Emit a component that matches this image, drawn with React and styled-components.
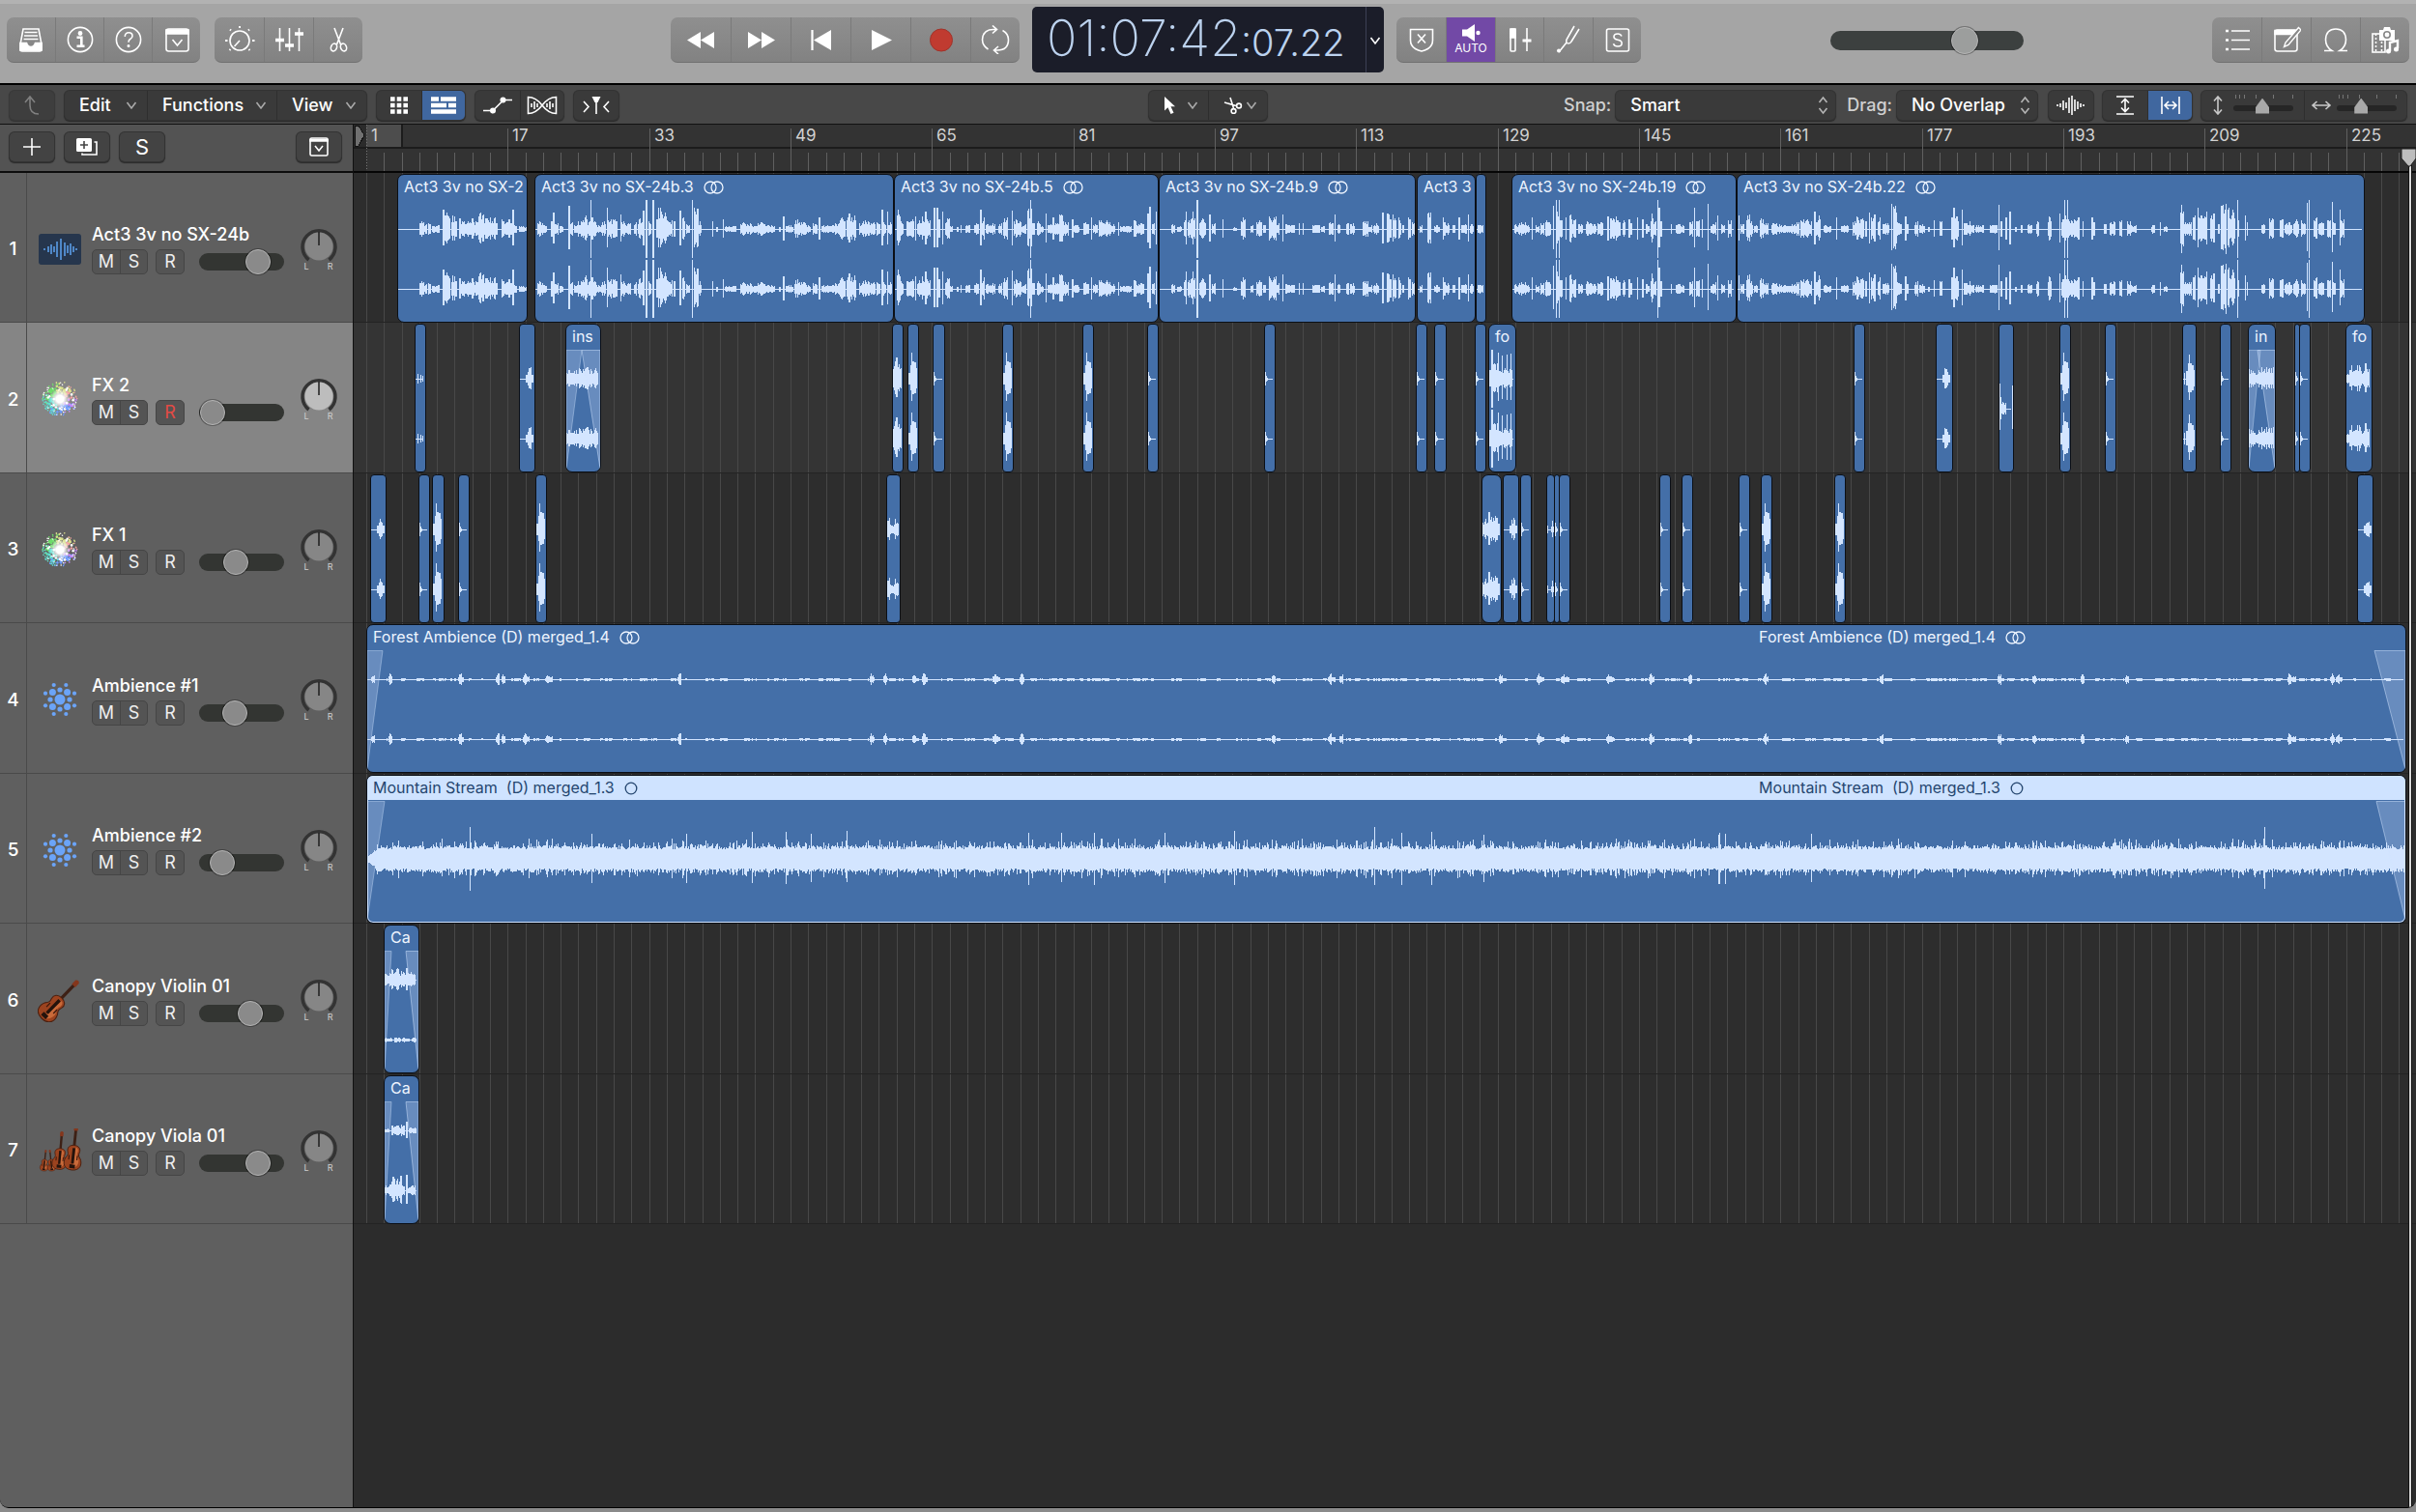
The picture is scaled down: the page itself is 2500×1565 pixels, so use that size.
import React from 'react'
import styled, { createGlobalStyle, css } from 'styled-components'

const GlobalStyle = createGlobalStyle`
  * { box-sizing: border-box; }
  html, body, #root { height: 100%; }
  body {
    margin: 0;
    background: #8a8a8a;
    font-family: Inter, "Liberation Sans", sans-serif;
    color: #fff;
    overflow: hidden;
  }
  button, select, input {
    font: inherit;
    color: inherit;
    margin: 0;
  }
`

/* ---------- timeline maths ---------- */

const FIRST_BAR = 13
const BAR_WIDTH = 146.33 / 16
const barX = bar => Math.round(FIRST_BAR + (bar - 1) * BAR_WIDTH)

const TOP = 57
const BOTTOM = 119
const MIDDLE = 87

function random(seed) {
  let s = seed
  return () => {
    s = (s * 1664525 + 1013904223) % 4294967296
    return s / 4294967296
  }
}

// every hit is [x, width, height]
function wavePath(hits, center, width, seed) {
  const rand = random(seed)
  let d = `M0 ${center}h${width - 4}v1H0z`
  hits.forEach(([x, w, amp]) => {
    for (let i = 0; i < w; i++) {
      const k = w < 3 ? 1 : 0.45 + 0.55 * rand()
      const up = Math.round(amp * k)
      const down = Math.round(Math.min(amp, 29) * k * (amp > 28 ? 1 : 0.82))
      d += `M${x + i} ${center - up}h1v${up + down + 1}h-1z`
    }
  })
  return d
}

function forest(width, seed) {
  const rand = random(seed)
  const hits = []
  let x = 4
  while (x < width - 10) {
    const w = 1 + Math.floor(rand() * 9)
    const loud = rand() > 0.86
    hits.push([x, w, loud ? 3 : 1])
    if (loud) {
      hits.push([x + 1, 3, 6])
    }
    x += w + 1 + Math.floor(rand() * rand() * 22)
  }
  return hits
}

function stream(width, seed) {
  const rand = random(seed)
  let d = ''
  for (let x = 0; x < width - 3; x++) {
    const ramp = Math.min(1, 0.2 + x / 14)
    const r = rand()
    const spike = r > 0.994 ? 15 : r > 0.94 ? 7 : r > 0.8 ? 4 : 0
    const up = Math.round((11 + rand() * 4 + spike) * ramp)
    const down = Math.round((9 + rand() * 4 + spike * 0.9) * ramp)
    d += `M${x} ${MIDDLE - up}h1v${up + down}h-1z`
  }
  return d + `M106 53h1v66h-1zM1042 53h1v60h-1zM1963 53h1v64h-1z`
}

/* ---------- data ---------- */

const dialogue = [
  { from: 44, hits: [
    [23, 5, 10], [28, 3, 5], [32, 3, 9], [36, 8, 4], [47, 2, 20], [49, 6, 18], [56, 4, 14], [60, 2, 8], [64, 3, 12], [67, 5, 9], [72, 8, 12], [80, 4, 8], [84, 6, 18], [90, 4, 12], [94, 10, 12], [108, 3, 16], [111, 4, 10], [115, 4, 11], [119, 2, 20], [121, 3, 7], [126, 8, 3],
    [143, 2, 16], [145, 6, 9], [151, 4, 4], [159, 2, 8], [161, 2, 17], [163, 4, 6], [168, 4, 4], [177, 2, 24], [179, 3, 8], [183, 4, 4], [187, 5, 9], [192, 5, 16], [197, 3, 8], [200, 1, 30], [201, 5, 12], [206, 6, 4], [212, 4, 8], [217, 1, 22], [218, 5, 11], [223, 3, 18], [226, 2, 8], [231, 1, 15], [232, 4, 11], [236, 6, 6], [245, 3, 8], [249, 5, 11], [254, 2, 19], [257, 2, 30], [260, 3, 9], [264, 2, 30], [268, 2, 10], [270, 5, 23], [275, 6, 17], [281, 4, 10], [286, 2, 8], [292, 2, 19], [295, 3, 12], [299, 4, 5], [305, 1, 30], [307, 5, 24], [312, 3, 8], [326, 1, 8], [330, 2, 2], [337, 1, 10], [339, 12, 3], [355, 6, 8], [361, 6, 6], [367, 6, 4], [373, 8, 7], [381, 10, 4], [395, 2, 2], [399, 2, 13], [402, 8, 4], [411, 6, 10], [417, 7, 7], [424, 4, 4], [430, 5, 7], [436, 2, 12], [439, 4, 4], [443, 10, 5], [453, 5, 7], [458, 4, 16], [462, 2, 8], [465, 4, 17], [469, 6, 14], [478, 3, 6], [481, 6, 9], [487, 8, 8], [496, 4, 8], [501, 2, 20], [503, 3, 8], [507, 1, 18], [508, 4, 7]
  ] },
  { from: 554, hits: [
    [7, 4, 20], [11, 3, 8], [17, 3, 9], [20, 5, 10], [26, 1, 13], [28, 5, 10], [33, 4, 14], [36, 2, 18], [38, 4, 13], [45, 2, 22], [48, 2, 22], [50, 2, 10], [54, 1, 18], [57, 5, 12], [62, 3, 4], [69, 2, 2], [73, 1, 4], [78, 5, 5], [87, 5, 6], [93, 2, 20], [95, 3, 14], [99, 10, 6], [112, 4, 6], [117, 5, 12], [126, 1, 19], [128, 8, 10], [136, 5, 5], [142, 5, 24], [145, 1, 30], [147, 3, 9], [152, 4, 8], [156, 3, 4], [161, 1, 16], [163, 6, 8], [168, 2, 12], [170, 5, 8], [175, 4, 15], [179, 6, 8], [188, 2, 10], [190, 6, 4], [200, 6, 7], [208, 1, 12], [210, 5, 5], [216, 12, 9], [228, 5, 5], [236, 1, 7], [238, 12, 4], [252, 3, 9], [255, 8, 6], [266, 2, 16], [268, 2, 23], [271, 3, 8], [275, 1, 18],
    [279, 6, 5], [291, 4, 5], [297, 5, 3], [304, 3, 10], [306, 1, 18], [308, 4, 11], [312, 4, 18], [317, 2, 30], [320, 7, 11], [330, 2, 15], [333, 4, 7], [344, 1, 10], [355, 4, 2], [363, 5, 13], [373, 3, 5], [379, 6, 10], [386, 3, 6], [392, 8, 14], [400, 3, 7], [406, 1, 15], [409, 4, 5], [413, 6, 4], [423, 1, 6], [427, 1, 6], [437, 8, 5], [446, 4, 4], [454, 5, 8], [460, 1, 15], [463, 3, 7], [472, 3, 8], [476, 5, 6], [489, 6, 9], [495, 4, 4], [500, 6, 6], [509, 2, 17], [514, 2, 16], [517, 2, 10]
  ] },
  { from: 1064, hits: [
    [5, 2, 15], [10, 4, 15], [16, 3, 12], [20, 2, 4], [26, 3, 14], [30, 3, 9],
    [38, 3, 4], [46, 4, 24], [53, 6, 4], [62, 3, 13], [65, 4, 7], [72, 3, 5], [78, 2, 12], [81, 6, 7], [88, 1, 15], [90, 4, 6],
    [98, 6, 5],
    [136, 6, 5], [141, 8, 7], [149, 3, 4], [154, 1, 12], [158, 4, 5], [163, 4, 7], [168, 6, 9], [176, 1, 24], [179, 1, 30], [180, 5, 19], [182, 1, 30], [184, 2, 9], [189, 1, 12], [193, 3, 16], [196, 4, 10], [202, 5, 6], [210, 5, 9], [215, 6, 6], [222, 6, 9], [232, 2, 13], [235, 5, 12], [240, 6, 14], [248, 3, 10], [254, 4, 11], [263, 1, 12], [268, 2, 10], [272, 4, 5], [277, 3, 16], [280, 3, 8], [284, 1, 30], [285, 2, 22], [287, 2, 8], [298, 1, 5], [303, 9, 5], [317, 4, 9], [322, 1, 22], [324, 4, 10], [330, 1, 10], [336, 1, 26], [339, 6, 7], [346, 1, 14], [350, 4, 5], [357, 4, 10],
    [368, 1, 14], [370, 4, 6], [376, 4, 18], [380, 3, 9], [384, 4, 4], [390, 4, 12], [394, 5, 6], [402, 6, 8], [408, 20, 5], [425, 6, 7], [432, 8, 12], [440, 4, 8], [446, 2, 18], [448, 5, 14], [456, 8, 4], [469, 1, 12], [474, 8, 4], [486, 3, 8], [489, 9, 13], [499, 2, 8], [503, 1, 17], [505, 3, 12], [508, 2, 15], [512, 3, 13], [517, 3, 6]
  ] },
  { from: 1574, hits: [
    [10, 4, 6], [16, 1, 26], [18, 4, 25], [22, 5, 8], [30, 2, 13], [32, 2, 5], [40, 4, 9], [45, 6, 5], [54, 2, 2], [60, 1, 9], [66, 3, 8], [78, 2, 12], [80, 2, 22], [82, 4, 14], [89, 1, 20], [91, 8, 8], [99, 3, 4], [103, 9, 4], [118, 8, 5], [127, 1, 25], [129, 2, 8], [134, 2, 12], [138, 2, 18], [144, 2, 2], [150, 2, 4], [157, 5, 6], [166, 3, 9], [178, 4, 13], [190, 1, 16], [192, 4, 11], [195, 1, 30], [196, 6, 14], [198, 1, 30], [202, 7, 12], [209, 2, 12], [214, 1, 8], [223, 2, 12], [225, 2, 7], [236, 3, 7], [242, 6, 8], [252, 3, 9], [260, 4, 8], [264, 6, 4], [285, 4, 5], [294, 1, 7], [298, 4, 3], [315, 1, 17], [316, 3, 30], [319, 8, 9], [328, 3, 15], [333, 5, 24], [338, 5, 20], [346, 5, 22], [354, 2, 5], [357, 3, 27], [359, 4, 30], [364, 8, 22], [374, 1, 30], [375, 1, 9], [382, 1, 14], [384, 1, 7], [399, 4, 6], [407, 5, 11], [418, 4, 12], [423, 8, 7], [432, 6, 10], [440, 5, 9], [446, 1, 27], [448, 1, 30], [453, 4, 17], [458, 6, 7], [467, 4, 18], [472, 1, 28], [473, 3, 12], [480, 1, 20], [481, 4, 11]
  ] }
]

const dialogueHits = dialogue.flatMap(({ from, hits }) =>
  hits.map(([x, w, amp]) => [x + from, w, amp])
)

const shapes = {
  tick: [[0, 1, 7], [1, 1, 3], [2, 1, 1]],
  blip: [[6, 2, 4], [8, 4, 12], [12, 2, 4]],
  pair: [[2, 1, 5], [5, 1, 4], [7, 1, 3]],
  burst: [[0, 2, 6], [2, 1, 14], [3, 1, 27], [4, 2, 18], [6, 2, 17], [8, 1, 11]],
  swell: [[0, 1, 10], [1, 1, 13], [2, 1, 18], [3, 2, 22], [5, 3, 17], [8, 1, 11]],
  blob: [[0, 3, 9], [3, 3, 12], [6, 2, 18], [8, 8, 15], [15, 3, 8]],
  block: [[0, 2, 9], [2, 1, 12], [3, 5, 7], [8, 1, 11], [9, 3, 8]],
  voice: [[0, 2, 9], [2, 2, 30], [4, 5, 18], [9, 1, 27], [10, 4, 12], [13, 1, 24], [14, 4, 13], [18, 1, 25], [19, 3, 12], [22, 1, 26], [23, 1, 9]],
  chatter: [[0, 5, 9], [5, 1, 14], [6, 5, 9], [11, 4, 15], [15, 4, 10], [19, 2, 16], [21, 3, 11]],
  insect: [[0, 5, 10], [5, 2, 6], [7, 6, 9], [13, 10, 13], [23, 6, 10], [29, 4, 12]],
  insectShort: [[0, 5, 10], [5, 2, 6], [7, 3, 8], [10, 6, 12], [16, 10, 13]],
  double: [[0, 1, 4], [4, 1, 3], [5, 1, 9], [6, 1, 3]],
  burstLate: [[1, 1, 6], [3, 3, 8], [5, 1, 16], [6, 1, 25], [7, 2, 16], [9, 2, 14], [11, 1, 9]],
  violin: [[0, 2, 6], [2, 4, 8], [6, 9, 12], [15, 7, 9], [22, 3, 12], [25, 7, 8]],
  flat: [[0, 8, 2], [10, 7, 2], [18, 8, 2], [28, 5, 2]],
  viola: [[0, 5, 2], [7, 5, 6], [12, 5, 5], [17, 4, 6], [22, 2, 9], [25, 8, 3]],
  violaLow: [[0, 4, 5], [4, 3, 8], [7, 3, 15], [10, 5, 12], [15, 3, 16], [18, 3, 8], [22, 2, 16], [24, 8, 5]]
}

const takes = [
  [45, 135, 'Act3 3v no SX-2'],
  [187, 372, 'Act3 3v no SX-24b.3', true],
  [559, 274, 'Act3 3v no SX-24b.5', true],
  [833, 266, 'Act3 3v no SX-24b.9', true],
  [1100, 61, 'Act3 3'],
  [1161, 11, ''],
  [1198, 233, 'Act3 3v no SX-24b.19', true],
  [1431, 650, 'Act3 3v no SX-24b.22', true]
].map(([x, w, label, stereo]) => ({
  x, w, label, stereo,
  top: dialogueHits.filter(h => h[0] > x && h[0] + h[1] < x + w).map(h => [h[0] - x, h[1], h[2]])
}))

const clips = list => list.map(([x, w, shape, label, fadeIn, fadeOut]) => ({
  x, w, label, fadeIn, fadeOut, top: shapes[shape]
}))

const tracks = [
  { name: 'Act3 3v no SX-24b', icon: 'audio', volume: 78, regions: takes },
  {
    name: 'FX 2', icon: 'spark', volume: 2, selected: true, armed: true,
    regions: [
      ...clips([
        [63, 12, 'pair'], [171, 17, 'blip'], [219, 37, 'insect', 'ins', 16, 19],
        [557, 12, 'swell'], [573, 12, 'burst'], [599, 13, 'tick'], [671, 12, 'burst'], [754, 12, 'burst'],
        [821, 12, 'tick'], [942, 12, 'tick'], [1099, 12, 'tick'], [1118, 13, 'tick'], [1160, 12, 'tick'],
        [1174, 29, 'voice', 'fo'], [1552, 12, 'tick'], [1637, 18, 'blip']
      ]),
      { x: 1702, w: 16, mono: true, top: [[0, 1, 26], [1, 1, 12], [2, 1, 5], [3, 4, 7], [13, 1, 24]] },
      ...clips([
        [1765, 12, 'burst'], [1812, 12, 'tick'], [1892, 15, 'burstLate'], [1931, 12, 'tick'],
        [1960, 29, 'insectShort', 'in', 12, 18], [2008, 6, 'tick'], [2013, 12, 'tick'], [2061, 28, 'chatter', 'fo']
      ])
    ]
  },
  {
    name: 'FX 1', icon: 'spark', volume: 40,
    regions: clips([
      [17, 17, 'blip'], [67, 12, 'tick'], [81, 13, 'burst'], [108, 12, 'tick'], [188, 12, 'burst'],
      [551, 15, 'block'], [1167, 21, 'blob'], [1189, 17, 'blip'], [1207, 12, 'tick'], [1234, 9, 'double'],
      [1242, 6, 'tick'], [1247, 12, 'tick'], [1351, 12, 'tick'], [1374, 12, 'tick'], [1433, 12, 'tick'],
      [1456, 12, 'burst'], [1532, 12, 'burst'], [2073, 17, 'blip']
    ])
  },
  {
    name: 'Ambience #1', icon: 'dots', volume: 38,
    regions: [{ x: 13, w: 2111, label: 'Forest Ambience (D) merged_1.4', stereo: true, repeat: true, top: forest(2111, 7), fadeIn: 16, fadeOut: 32 }]
  },
  {
    name: 'Ambience #2', icon: 'dots', volume: 17,
    regions: [{ x: 13, w: 2111, label: 'Mountain Stream  (D) merged_1.3', ring: true, repeat: true, active: true, path: stream(2111, 11), fadeIn: 18, fadeOut: 30 }]
  },
  {
    name: 'Canopy Violin 01', icon: 'violin', volume: 65,
    regions: [{ x: 31, w: 37, label: 'Ca', top: shapes.violin, bottom: shapes.flat, fadeIn: 7, fadeOut: 13 }]
  },
  {
    name: 'Canopy Viola 01', icon: 'strings', volume: 78,
    regions: [{ x: 31, w: 37, label: 'Ca', top: shapes.viola, bottom: shapes.violaLow, fadeIn: 7, fadeOut: 13 }]
  }
]

/* ---------- top bar ---------- */

const Window = styled.div`
  display: flex;
  flex-direction: column;
  height: 100vh;
  padding-bottom: 4px;
`

const TopBar = styled.header`
  display: grid;
  grid-template-columns: 1fr auto 1fr;
  column-gap: 13px;
  height: 88px;
  padding: 7px 7px 0;
  background: #a5a5a5;
  border-top: 4px solid #b2b2b2;
  border-bottom: 2px solid #000;
`

const Side = styled.div`
  display: flex;
  justify-content: space-between;
  padding-top: 7px;
`

const Cluster = styled.div`
  display: flex;
  gap: 15px;
`

const ButtonGroup = styled.div`
  display: flex;
  height: 47px;
  border-radius: 7px;
  overflow: hidden;
  background: linear-gradient(#8f8f8f, #828282);
  border-bottom: 1px solid #717171;
`

const TopButton = styled.button`
  display: flex;
  flex-direction: column;
  align-items: center;
  justify-content: center;
  width: ${props => props.$width || 51}px;
  padding: 0;
  border: 0;
  font-size: 12px;
  line-height: 14px;
  background: ${props => (props.$on ? '#7249a6' : 'transparent')};
  & + & {
    border-left: 1px solid #7a7a7a;
  }
`

const Lcd = styled.div`
  display: flex;
  width: 364px;
  height: 68px;
  margin-top: -4px;
  border-radius: 5px;
  background: #1b1d29;
  color: #bcd2ee;
`

const Time = styled.div`
  flex: 1;
  display: flex;
  align-items: baseline;
  padding-left: 15px;
  font-weight: 200;
  font-size: 52px;
  line-height: 66px;
  small {
    font-size: 38px;
    font-weight: 300;
  }
`

const LcdMenu = styled.button`
  width: 19px;
  padding: 0;
  border: 0;
  border-left: 1px solid #3c4054;
  background: none;
`

const Range = styled.input.attrs({ type: 'range' })`
  appearance: none;
  display: block;
  width: ${props => props.$width}px;
  height: ${props => props.$thumb}px;
  background: none;
  &::-webkit-slider-runnable-track {
    height: ${props => props.$track}px;
    border-radius: 10px;
    background: ${props => props.$color || '#333532'};
  }
  &::-webkit-slider-thumb {
    appearance: none;
    width: ${props => props.$thumb}px;
    height: ${props => props.$thumb}px;
    margin-top: ${props => (props.$track - props.$thumb) / 2}px;
    border-radius: 50%;
    border: 1px solid #b5b5b5;
    background: ${props => props.$knob || '#8a8a8a'};
    box-shadow: 0 0 0 1px rgba(0, 0, 0, 0.3);
  }
`

const MasterVolume = styled.label`
  display: flex;
  align-items: center;
  height: 47px;
`

/* ---------- menu bar ---------- */

const MenuBar = styled.nav`
  display: grid;
  grid-template-columns: 1fr auto 1fr;
  align-items: center;
  height: 41px;
  padding: 1px 10px 0;
  background: #484848;
  border-bottom: 1px solid #111;
  font-size: 18px;
`

const Tools = styled.div`
  display: flex;
  align-items: center;
  gap: ${props => (props.$end ? 10 : 11)}px;
  justify-content: ${props => (props.$end ? 'flex-end' : 'flex-start')};
`

const Segment = styled.div`
  display: flex;
  height: 30px;
  border-radius: 5px;
  background: #3a3a3a;
  box-shadow: 0 0 0 1px #333, 0 1px 1px 1px #2a2a2a;
  overflow: hidden;
  opacity: ${props => (props.$dim ? 0.7 : 1)};
`

const ToolButton = styled.button`
  display: flex;
  align-items: center;
  justify-content: ${props => (props.$menu ? 'space-between' : 'center')};
  width: ${props => props.$width || 46}px;
  padding: ${props => (props.$menu ? '0 10px 0 15px' : 0)};
  border: 0;
  font-size: ${props => props.$size || 18}px;
  font-weight: ${props => (props.$size ? 400 : 500)};
  line-height: 30px;
  background: ${props => (props.$on ? '#40679f' : 'transparent')};
  & + & {
    border-left: 1px solid #2e2e2e;
  }
`

const Field = styled.label`
  display: flex;
  align-items: center;
  gap: 5px;
  padding-right: 2px;
  color: #d0d0d0;
  font-weight: 500;
`

const SelectBox = styled.div`
  display: grid;
  width: ${props => props.$width}px;
  height: 30px;
  border-radius: 5px;
  background: #3a3a3a;
  box-shadow: 0 0 0 1px #333, 0 1px 1px 1px #2a2a2a;
  color: #fff;
  > * {
    grid-area: 1 / 1;
  }
  svg {
    justify-self: end;
    align-self: center;
    margin-right: 7px;
    pointer-events: none;
  }
  select {
    appearance: none;
    border: 0;
    padding: 0 0 0 15px;
    background: none;
    font-size: 18px;
    line-height: 30px;
  }
`

const ZoomControl = styled.label`
  display: flex;
  align-items: center;
  gap: 5px;
  width: 106px;
  padding: 0 6px;
  & + & {
    border-left: 1px solid #2e2e2e;
  }
`

const ZoomRange = styled.input.attrs({ type: 'range' })`
  appearance: none;
  width: 62px;
  height: 22px;
  background:
    linear-gradient(90deg, #777 1px, transparent 0 4px, #777 0 5px, transparent 0 9px, #777 0 10px, transparent 0 21px, #777 0 22px, transparent 0 39px, #777 0 40px, transparent 0 59px, #777 0 60px, transparent 0) 2px 0 / 62px 4px no-repeat;
  &::-webkit-slider-runnable-track {
    height: 6px;
    margin-top: 6px;
    border-radius: 3px;
    background: #262626;
  }
  &::-webkit-slider-thumb {
    appearance: none;
    width: 14px;
    height: 16px;
    margin-top: -7px;
    background: #a9a9a9;
    clip-path: polygon(50% 0, 100% 60%, 100% 100%, 0 100%, 0 60%);
  }
`

/* ---------- track list ---------- */

const Workspace = styled.main`
  flex: 1;
  display: grid;
  grid-template-columns: 366px minmax(0, 1fr);
  min-height: 0;
  background: #2c2c2c;
  border-bottom: 1px solid #000;
  border-radius: 0 0 9px 9px;
  overflow: hidden;
`

const Panel = styled.section`
  display: flex;
  flex-direction: column;
  background: #5f5f5f;
  border-right: 1px solid #111;
`

const PanelTools = styled.div`
  display: flex;
  align-items: center;
  gap: 11px;
  height: 50px;
  padding: 0 12px 2px 10px;
  background: #535353;
  border-bottom: 2px solid #0c0c0c;
  ${Segment} {
    background: #434343;
  }
  ${Segment}:last-child {
    margin-left: auto;
  }
`

const rowHeight = css`
  height: 155px;
  &:nth-child(even) {
    height: 156px;
  }
`

const Tracks = styled.div`
  flex: none;
`

const TrackHeader = styled.div`
  ${rowHeight}
  display: grid;
  grid-template-columns: 28px 67px 1fr 71px;
  background: ${props => (props.$selected ? '#858585' : '#5f5f5f')};
  border-bottom: 1px solid #4a4a4a;
  > * {
    padding-top: 3px;
  }
`

const TrackNumber = styled.div`
  display: grid;
  place-items: center;
  border-right: 1px solid #4a4a4a;
  font-size: 19px;
  font-weight: 500;
`

const IconCell = styled.div`
  display: grid;
  place-items: center;
`

const TrackInfo = styled.div`
  align-self: center;
`

const TrackName = styled.div`
  font-size: 18px;
  font-weight: 500;
  line-height: 24px;
  white-space: nowrap;
`

const TrackControls = styled.div`
  display: flex;
  align-items: center;
  margin-top: 3px;
`

const SmallGroup = styled.div`
  display: flex;
  height: 26px;
  margin-right: ${props => (props.$last ? 15 : 8)}px;
  border: 1px solid #454545;
  border-radius: 5px;
  background: #545454;
`

const SmallButton = styled.button`
  width: 28px;
  padding: 0;
  border: 0;
  background: none;
  font-size: 18px;
  line-height: 24px;
  color: ${props => (props.$armed ? '#e24b45' : '#eee')};
  & + & {
    border-left: 1px solid #454545;
  }
`

const Pan = styled.div`
  align-self: center;
  display: flex;
  flex-direction: column;
  align-items: center;
`

const PanLabels = styled.div`
  display: flex;
  justify-content: space-between;
  width: 30px;
  margin-top: -4px;
  font-size: 9px;
  line-height: 10px;
  color: #cfcfcf;
`

/* ---------- arrange area ---------- */

const Arrange = styled.section`
  position: relative;
  overflow: hidden;
`

const Ruler = styled.div`
  position: relative;
  height: 50px;
  background: #333;
  border-bottom: 2px solid #060606;
  svg {
    display: block;
  }
`

const BarNumber = styled.span`
  position: absolute;
  top: 0;
  padding-left: 5px;
  font-size: 17px;
  line-height: 22px;
  color: #d2d2d2;
`

const Lanes = styled.div`
  position: relative;
`

const GridLines = styled.svg`
  position: absolute;
  inset: 0;
  width: 100%;
  height: 100%;
`

const Lane = styled.div`
  ${rowHeight}
  position: relative;
  background: ${props => (props.$selected ? '#343434' : '#2d2d2d')};
  border-bottom: 1px solid #232323;
`

const RegionBox = styled.div`
  position: absolute;
  top: 1px;
  height: 154px;
  border: 1px solid #0b0f16;
  border-radius: ${props => (props.$narrow ? 4 : 7)}px;
  background: #446fa8;
  overflow: hidden;
  ${props => props.$active && css`
    box-shadow: inset 0 0 0 1px #cfe3ff;
  `}
  > svg {
    position: absolute;
    inset: 0;
  }
`

const RegionTitle = styled.div`
  display: grid;
  grid-template-columns: ${props => (props.$repeat ? '68% 32%' : '1fr')};
  height: 25px;
  color: ${props => (props.$active ? '#25466f' : '#eef5ff')};
  background: ${props => (props.$active ? '#cfe3ff' : 'transparent')};
`

const RegionLabel = styled.div`
  display: flex;
  align-items: center;
  gap: 10px;
  padding-left: 6px;
  font-size: 16px;
  line-height: 25px;
  white-space: pre;
`

const Playhead = styled.div`
  position: absolute;
  top: 24px;
  right: 0;
  bottom: 0;
  width: 16px;
  overflow: hidden;
  svg {
    position: absolute;
    inset: 0;
  }
  &::before {
    content: '';
    position: absolute;
    top: 14px;
    left: 9px;
    bottom: 0;
    width: 2px;
    background: #d8d8d8;
    box-shadow: -1px 0 #111, 1px 0 #111;
  }
`

/* ---------- icons ---------- */

const Svg = ({ w = 30, h = 30, children, ...rest }) => (
  <svg width={w} height={h} viewBox={`0 0 ${w} ${h}`} fill="none" stroke="#fff" strokeWidth="1.6" aria-hidden="true" {...rest}>
    {children}
  </svg>
)

const Chevron = () => (
  <Svg w={12} h={10} stroke="#aaa"><path d="M1.5 2l4.500 6 4.500-6" /></Svg>
)

const UpDown = () => (
  <Svg w={11} h={20} stroke="#b5b5b5"><path d="M1.5 7l4-5 4 5M1.5 13l4 5 4-5" /></Svg>
)

const icons = {
  library: <Svg><path d="M7 4h16l3 16v5q0 2-2 2H6q-2 0-2-2v-5z" /><path d="M8.500 7.500h13M8 11h14M7.500 14.500h15" /><path d="M4 18.500h6.500q1 4 4.500 4t4.500-4H26V26H4z" fill="#fff" /></Svg>,
  info: <Svg><circle cx="15" cy="15" r="12.600" /><circle cx="15" cy="8.500" r="1.600" fill="#fff" /><path d="M11.500 12.800h4.800v8M11.500 21.800h8" strokeWidth="2.600" /></Svg>,
  help: <Svg><circle cx="15" cy="15" r="12.600" /><path d="M11.200 11.800q.4-4 4-4 3.800 0 3.800 3.400 0 2-2.300 3.300-1.700 1-1.700 3.300" /><circle cx="15" cy="21.500" r=".7" fill="#fff" /></Svg>,
  toolbar: <Svg><rect x="4" y="4" width="23" height="23" rx="2.500" /><path d="M4 5h23v4H4z" fill="#fff" /><path d="M10.500 15l5 6 5-6" /></Svg>,
  smart: <Svg w={34}><circle cx="17" cy="16" r="10" /><path d="M17 16l-5.500 6" /><path d="M17 1v2M7 4.500l1 1M27 4.500l-1 1M2 16h2.500M30 16h2.500M6.500 26l1-1M27.500 26l-1-1" strokeWidth="2" /></Svg>,
  mixer: <Svg><path d="M5.500 3v24M15.500 3v24M25.500 3v24" /><path d="M1 15.500h9M11 21h9M21 9h9" strokeWidth="3.400" /></Svg>,
  scissors: <Svg><path d="M11 3l6.500 17M20 3l-6.500 17" /><ellipse cx="10.500" cy="23" rx="3" ry="4" transform="rotate(20 10.500 23)" /><ellipse cx="20.500" cy="23" rx="3" ry="4" transform="rotate(-20 20.500 23)" /></Svg>,
  rewind: <Svg><path d="M15 7v17L1 15.500zM29 7v17l-14-8.500z" fill="#fff" stroke="none" /></Svg>,
  forward: <Svg><path d="M1 7v17l14-8.500zM15 7v17l14-8.500z" fill="#fff" stroke="none" /></Svg>,
  start: <Svg><path d="M25 5v21L7 15.500z" fill="#fff" stroke="none" /><path d="M5.500 5v21" strokeWidth="2.200" /></Svg>,
  play: <Svg><path d="M5 5v21l21-10.500z" fill="#fff" stroke="none" /></Svg>,
  record: <Svg><circle cx="15" cy="15.500" r="11.500" fill="#c03b30" stroke="#9f342b" strokeWidth="1" /></Svg>,
  cycle: <Svg><path d="M7.500 25Q1.500 21 1.500 15 2 4.500 13 4.500h3.500M22.500 5.500q6 3.500 6 9.500 0 11-11.500 11h-3.500M12 .5l4.500 4-4.500 4M18 22l-4.500 4 4.500 4" /></Svg>,
  shield: <Svg><path d="M3.500 4.500h23v11q0 6-5 9-3 1.800-6.500 2.500-3.500-.7-6.500-2.500-5-3-5-9z" /><path d="M11 9.500l8 9M19 9.500l-8 9" /></Svg>,
  speaker: <Svg w={28} h={18}><path d="M5 5.500h5L18 0v18l-8-5.500H5z" fill="#fff" stroke="none" /><circle cx="21.500" cy="9" r="2.200" fill="#fff" stroke="none" /></Svg>,
  level: <Svg><rect x="5" y="4" width="5" height="23" rx="1" /><path d="M5 4h5v9H5z" fill="#fff" /><path d="M22 3v24" /><path d="M17.500 16h9" strokeWidth="3" /></Svg>,
  fork: <Svg><path d="M21 1l-8 14q-1 4 2 4 2 0 3-2l8-13M13 18L5 28" /><circle cx="5" cy="26.500" r="2" fill="#fff" stroke="none" /></Svg>,
  solo: <Svg><rect x="3.500" y="4" width="23" height="23" rx="2" /><path d="M19 11.500Q18 9 15 9q-4 0-4 3 0 2.500 4 3.200 4.200.8 4.200 3.500 0 3.300-4.200 3.300-3.500 0-4.500-2.800" /></Svg>,
  list: <Svg><path d="M9 6h19M9 15.500h19M9 25h19" /><path d="M3 6h3M3 15.500h3M3 25h3" strokeWidth="2.600" /></Svg>,
  note: <Svg><rect x="3" y="5" width="23" height="22" rx="2.500" /><path d="M3 5.500h23v4H3z" fill="#fff" /><path d="M27.500 2.500L14 18l-1.500 4.500L17 20.500 30 5z" fill="#8a8a8a" strokeWidth="1.400" /></Svg>,
  loop: <Svg><path d="M3 26.500h8q-6.500-4-6.500-11.500Q5 4 15 4t10.500 11q0 7.500-6.500 11.500h8" /></Svg>,
  media: <Svg w={32}><rect x="3" y="9" width="13" height="19" /><path d="M6.500 9v19M12.500 9v19" strokeDasharray="2 2" /><path d="M10 5h4l1-3h6l1 3h4v11H10z" fill="#fff" stroke="none" /><circle cx="18" cy="10" r="3.200" stroke="#888" /><path d="M21 27v-9l8-2v8" strokeWidth="2.400" /><circle cx="19.500" cy="27" r="2.500" fill="#fff" stroke="none" /><circle cx="27.500" cy="25" r="2.500" fill="#fff" stroke="none" /></Svg>,
  back: <Svg w={24} h={22} stroke="#999"><path d="M5 8l5-6 5 6M10 2v9q0 9 9 9" /></Svg>,
  grid: <Svg w={18} h={18}><path d="M0 2.500h18M0 9h18M0 15.500h18" strokeWidth="4.600" strokeDasharray="4.600 2.100" /></Svg>,
  bricks: <Svg w={26} h={18}><path d="M0 2.500h8M10 2.500h16M0 9h16M18 9h8M0 15.500h26" strokeWidth="4.600" /></Svg>,
  automation: <Svg w={32} h={20}><path d="M1 15.500h10L22 4.500h9" /><circle cx="11" cy="15.500" r="3" fill="#fff" stroke="none" /><circle cx="21.500" cy="4.500" r="3" fill="#fff" stroke="none" /></Svg>,
  flex: <Svg w={32} h={20}><path d="M1.500 1.500q8 0 14.500 8.500 6.500 8.500 14.500 8.500v-17q-8 0-14.500 8.500Q9.500 18.500 1.500 18.500z" /><path d="M5 8v4M8 6v8M11 8v4M21 8v4M24 6v8M27 8v4" /></Svg>,
  catchUp: <Svg w={28} h={20}><path d="M1 6l5 5.500L1 17M27 6l-5 5.500 5 5.500M14 6v13" /><path d="M9.500 1h9l-3 6h-3z" fill="#fff" stroke="none" /></Svg>,
  pointer: <Svg w={14} h={20}><path d="M1 1v14.500l3.500-3.200 3 6.700 3-1.300-3-6.500H12z" fill="#fff" stroke="none" /></Svg>,
  cut: <Svg w={20} h={18}><path d="M1 6l12 3.500M7 1l3.500 11" /><circle cx="16" cy="9.500" r="2.400" /><circle cx="10.500" cy="15" r="2.400" /></Svg>,
  wave: <Svg w={30} h={20}><path d="M1 9v2M4 8v4M7 5v10M10 7v6M13 2v16M16 0v20M19 4v12M22 6v8M25 8v4M28 9v2" /></Svg>,
  fitY: <Svg w={20} h={22}><path d="M1 2h18M1 20h18M10 5v12M6 8.500L10 4.500l4 4M6 13.500l4 4 4-4" /></Svg>,
  fitX: <Svg w={20} h={22}><path d="M1 2v18M19 2v18M4 11h12M8 7l-4 4 4 4M12 7l4 4-4 4" /></Svg>,
  up: <Svg w={22} h={20} stroke="#c8c8c8"><path d="M11 1v18M7 5.500L11 1l4 4.500M7 14.500l4 4.500 4-4.500" /></Svg>,
  side: <Svg w={22} h={12} stroke="#c8c8c8"><path d="M2 6h18M6.500 2L2 6l4.500 4M15.500 2L20 6l-4.500 4" /></Svg>,
  plus: <Svg w={20} h={20}><path d="M10 1v18M1 10h18" /></Svg>,
  duplicate: <Svg w={24} h={20}><rect x="1" y="1" width="16" height="14" rx="1.500" fill="#fff" stroke="none" /><path d="M9 4v8M5 8h8" stroke="#444" /><path d="M19.500 5H22v13H7v-1.500" /></Svg>,
  options: <Svg w={20} h={20}><rect x="1" y="1" width="18" height="18" rx="1.500" /><path d="M1 2.500h18v1.500H1z" fill="#fff" /><path d="M6 9l4 5 4-5" /></Svg>
}

const sparkColors = ['#f06bd0', '#c78bff', '#6f9bff', '#5fe0d0', '#6fdc6a', '#d8e08a', '#f0a0a0']

function Spark() {
  const rand = random(5)
  const dots = Array.from({ length: 230 }, (_, i) => {
    const angle = rand() * Math.PI * 2
    const r = 4 + Math.sqrt(rand()) * 14
    const hue = Math.floor(((angle + 1 + rand()) / 8.3) * 7) % 7
    return (
      <circle key={i} cx={20 + r * Math.cos(angle)} cy={20 + r * Math.sin(angle)} r={r > 14 ? 0.8 : 1.3} fill={i % 5 ? sparkColors[hue] : '#fff'} />
    )
  })
  return (
    <Svg w={40} h={40} stroke="none">
      <defs>
        <radialGradient id="glow">
          <stop offset="35%" stopColor="#fff" />
          <stop offset="100%" stopColor="#fff" stopOpacity="0" />
        </radialGradient>
      </defs>
      {dots}
      <circle cx="20" cy="20" r="11" fill="url(#glow)" />
    </Svg>
  )
}

const signs = [[1, 1], [1, -1], [-1, 1], [-1, -1]]

const Dots = () => (
  <Svg w={36} h={36} fill="#6ba4f8" stroke="none">
    <circle cx="18" cy="18" r="5.500" />
    {signs.map(([a, b]) => (
      <g key={`${a}${b}`}>
        <circle cx={18 + 7.600 * a} cy={18 + 7.600 * b} r="3.500" />
        <circle cx={18 + 6.300 * a} cy={18 + 15 * b} r="2.100" />
        <circle cx={18 + 15 * a} cy={18 + 6.300 * b} r="2.100" />
      </g>
    ))}
    <circle cx="18" cy="8" r="2.600" />
    <circle cx="18" cy="28" r="2.600" />
    <circle cx="8" cy="18" r="2.600" />
    <circle cx="28" cy="18" r="2.600" />
  </Svg>
)

const Violin = ({ scale = 1, x = 0, y = 0, turn = 0 }) => (
  <g transform={`translate(${x} ${y}) rotate(${turn}) scale(${scale})`}>
    <path d="M-1.500-26h3V2h-3z" fill="#3d2015" />
    <path d="M-2.200-30q2.200-3 4.400 0v5h-4.400z" fill="#84361c" />
    <path d="M0-9c5 0 7.500 3 6.500 7-1 3-1 4 1.500 7 3 6 1 13-8 13S-11 11 -8 5c2.500-3 2.500-4 1.500-7-1-4 1.500-7 6.500-7z" fill="#9c431f" stroke="#4b2010" strokeWidth="1" />
    <path d="M2-7c3 1 3.500 4 2 7 0 4 4 5 2 11-1 3-4 5-6 5z" fill="#c96a3a" />
    <path d="M-1.500-6h3V11h-3zM-3 12h6v4h-6z" fill="#24130c" />
    <path d="M-4.500 2v5M4.500 2v5" stroke="#3a180c" strokeWidth="1.200" />
  </g>
)

const trackIcons = {
  audio: (
    <Svg w={44} h={32} stroke="#5b9de6">
      <rect width="44" height="32" rx="3" fill="#26364d" stroke="none" />
      <path d="M6 15v2M10 13v6M13 11v10M16 13v6M19 8v16M23 5v22M27 9v14M30 12v8M33 10v12M36 13v6M39 15v2" />
    </Svg>
  ),
  spark: <Spark />,
  dots: <Dots />,
  violin: <Svg w={46} h={46} stroke="none"><Violin x={18} y={28} turn={44} scale={1.100} /></Svg>,
  strings: (
    <Svg w={46} h={46} stroke="none">
      <Violin x={7} y={36} scale={0.45} turn={6} />
      <Violin x={14} y={36} scale={0.45} turn={-6} />
      <Violin x={23} y={28} scale={0.800} turn={5} />
      <Violin x={37} y={26} scale={0.950} turn={6} />
    </Svg>
  )
}

/* ---------- components ---------- */

const TopGroup = ({ items, width }) => (
  <ButtonGroup>
    {items.map(([name, label]) => (
      <TopButton key={name} $width={width} aria-label={label}>{icons[name]}</TopButton>
    ))}
  </ButtonGroup>
)

const Toolbar = () => (
  <TopBar>
    <Side>
      <Cluster>
        <TopGroup width={50} items={[['library', 'Library'], ['info', 'Inspector'], ['help', 'Quick Help'], ['toolbar', 'Toolbar']]} />
        <TopGroup items={[['smart', 'Smart Controls'], ['mixer', 'Mixer'], ['scissors', 'Editors']]} />
      </Cluster>
      <ButtonGroup>
        {['rewind', 'forward', 'start', 'play', 'record'].map(name => (
          <TopButton key={name} $width={62} aria-label={name}>{icons[name]}</TopButton>
        ))}
        <TopButton aria-label="cycle">{icons.cycle}</TopButton>
      </ButtonGroup>
    </Side>
    <Lcd>
      <Time><span>01:07:42</span><small>:07.22</small></Time>
      <LcdMenu aria-label="Display mode"><Svg w={12} h={10}><path d="M1.500 2l4.500 6 4.500-6" /></Svg></LcdMenu>
    </Lcd>
    <Side>
      <ButtonGroup>
        <TopButton aria-label="Replace">{icons.shield}</TopButton>
        <TopButton $on>{icons.speaker}AUTO</TopButton>
        <TopButton $width={50} aria-label="Low latency">{icons.level}</TopButton>
        <TopButton aria-label="Tuner">{icons.fork}</TopButton>
        <TopButton $width={50} aria-label="Solo">{icons.solo}</TopButton>
      </ButtonGroup>
      <MasterVolume>
        <Range aria-label="Master volume" $width={200} $thumb={28} $track={20} $color="#3c403f" $knob="#9c9e9d" defaultValue={73} />
      </MasterVolume>
      <TopGroup items={[['list', 'Lists'], ['note', 'Notes'], ['loop', 'Loops'], ['media', 'Browsers']]} />
    </Side>
  </TopBar>
)

const Menus = () => (
  <MenuBar>
    <Tools>
      <Segment $dim><ToolButton aria-label="Back">{icons.back}</ToolButton></Segment>
      <Segment>
        <ToolButton $menu $width={85}>Edit<Chevron /></ToolButton>
        <ToolButton $menu $width={134}>Functions<Chevron /></ToolButton>
        <ToolButton $menu $width={93}>View<Chevron /></ToolButton>
      </Segment>
      <Segment>
        <ToolButton aria-label="Grid">{icons.grid}</ToolButton>
        <ToolButton $on $width={45} aria-label="Tracks">{icons.bricks}</ToolButton>
      </Segment>
      <Segment>
        <ToolButton aria-label="Automation">{icons.automation}</ToolButton>
        <ToolButton $width={45} aria-label="Flex">{icons.flex}</ToolButton>
      </Segment>
      <Segment><ToolButton aria-label="Catch">{icons.catchUp}</ToolButton></Segment>
    </Tools>
    <Segment>
      <ToolButton $menu $width={61} aria-label="Pointer tool">{icons.pointer}<Chevron /></ToolButton>
      <ToolButton $menu $width={61} aria-label="Scissors tool">{icons.cut}<Chevron /></ToolButton>
    </Segment>
    <Tools $end>
      <Field>
        Snap:
        <SelectBox $width={227}>
          <select defaultValue="Smart"><option>Smart</option></select>
          <UpDown />
        </SelectBox>
      </Field>
      <Field>
        Drag:
        <SelectBox $width={145}>
          <select defaultValue="No Overlap"><option>No Overlap</option></select>
          <UpDown />
        </SelectBox>
      </Field>
      <Segment><ToolButton aria-label="Waveform zoom">{icons.wave}</ToolButton></Segment>
      <Segment>
        <ToolButton aria-label="Fit vertically">{icons.fitY}</ToolButton>
        <ToolButton $on aria-label="Fit horizontally">{icons.fitX}</ToolButton>
      </Segment>
      <Segment>
        <ZoomControl>{icons.up}<ZoomRange aria-label="Vertical zoom" defaultValue={48} /></ZoomControl>
        <ZoomControl>{icons.side}<ZoomRange aria-label="Horizontal zoom" defaultValue={38} /></ZoomControl>
      </Segment>
    </Tools>
  </MenuBar>
)

const Header = ({ track, number }) => (
  <TrackHeader $selected={track.selected}>
    <TrackNumber>{number}</TrackNumber>
    <IconCell>{trackIcons[track.icon]}</IconCell>
    <TrackInfo>
      <TrackName>{track.name}</TrackName>
      <TrackControls>
        <SmallGroup><SmallButton>M</SmallButton><SmallButton>S</SmallButton></SmallGroup>
        <SmallGroup $last><SmallButton $armed={track.armed}>R</SmallButton></SmallGroup>
        <Range aria-label={`${track.name} volume`} $width={88} $thumb={26} $track={18} defaultValue={track.volume} />
      </TrackControls>
    </TrackInfo>
    <Pan>
      <Svg w={40} h={40} stroke="#333">
        <path d="M9.500 34A17 17 0 1 1 30.500 34" strokeWidth="3.500" />
        <circle cx="20" cy="20" r="14.500" fill={track.selected ? '#bdbdbd' : '#868686'} stroke="none" />
        <path d="M20 5v14" strokeWidth="1.500" stroke="#1c1c1c" />
      </Svg>
      <PanLabels><span>L</span><span>R</span></PanLabels>
    </Pan>
  </TrackHeader>
)

const TitleText = ({ region }) => (
  <RegionLabel>
    {region.label}
    {region.stereo && (
      <Svg w={21} h={14} stroke="currentColor" strokeWidth="1.300"><circle cx="7" cy="7" r="6" /><circle cx="14" cy="7" r="6" /></Svg>
    )}
    {region.ring && <Svg w={14} h={14} stroke="currentColor" strokeWidth="1.300"><circle cx="7" cy="7" r="5.800" /></Svg>}
  </RegionLabel>
)

const Region = ({ region }) => {
  const { x, w, fadeIn, fadeOut, top, bottom } = region
  const inner = w - 2
  let d = region.path
  if (!d) {
    d = region.mono
      ? wavePath(top, MIDDLE, w, x)
      : wavePath(top, TOP - 1, w, x) + wavePath(bottom || top, BOTTOM - 1, w, bottom ? x + 9 : x)
  }
  return (
    <RegionBox $narrow={w < 20} $active={region.active} style={{ left: x, width: w }}>
      {region.label && (
        <RegionTitle $active={region.active} $repeat={region.repeat}>
          <TitleText region={region} />
          {region.repeat && <TitleText region={region} />}
        </RegionTitle>
      )}
      <svg width={inner} height="152" viewBox={`0 0 ${inner} 152`}>
        <path d={d} fill="#d3e5ff" shapeRendering="crispEdges" />
        {fadeIn && <path d={`M0 26.500H${fadeIn}L0 149z`} fill="#d3e5ff" fillOpacity=".25" stroke="#d3e5ff" strokeOpacity=".4" />}
        {fadeOut && <path d={`M${inner - fadeOut} 26.500H${inner}V149z`} fill="#d3e5ff" fillOpacity=".25" stroke="#d3e5ff" strokeOpacity=".5" />}
      </svg>
    </RegionBox>
  )
}

const gridBars = Array.from({ length: 116 }, (_, i) => 1 + i * 2)

const TimeRuler = () => {
  const major = gridBars.filter(bar => (bar - 1) % 16 === 0)
  const minor = gridBars.filter(bar => (bar - 1) % 16 !== 0)
  return (
    <Ruler>
      <svg width="100%" height="48" shapeRendering="crispEdges">
        <rect width="13" height="48" fill="#2b2b2b" />
        <rect x="13" width="37" height="24" fill="#4d4d4d" />
        <path d="M0 24h2200M50 0v24" stroke="#1c1c1c" strokeWidth="2" />
        <path d="M1 1h4l6 10-6 11H1z" fill="#707070" stroke="#111" />
        <path d={minor.map(bar => `M${barX(bar)} 29h1v19h-1z`).join('')} fill="#606060" />
        <path d={major.slice(1).map(bar => `M${barX(bar)} 4h1v44h-1z`).join('')} fill="#606060" />
        <path d="M13.500 0v48" stroke="#777" strokeDasharray="1 2" />
      </svg>
      {major.map(bar => <BarNumber key={bar} style={{ left: barX(bar) }}>{bar}</BarNumber>)}
    </Ruler>
  )
}

const App = () => (
  <Window>
    <GlobalStyle />
    <Toolbar />
    <Menus />
    <Workspace>
      <Panel>
        <PanelTools>
          <Segment><ToolButton aria-label="Add track">{icons.plus}</ToolButton></Segment>
          <Segment><ToolButton aria-label="Duplicate track">{icons.duplicate}</ToolButton></Segment>
          <Segment><ToolButton $size={22}>S</ToolButton></Segment>
          <Segment><ToolButton aria-label="Track options">{icons.options}</ToolButton></Segment>
        </PanelTools>
        <Tracks>
          {tracks.map((track, i) => <Header key={track.name} track={track} number={i + 1} />)}
        </Tracks>
      </Panel>
      <Arrange>
        <TimeRuler />
        <Lanes>
          {tracks.map(track => (
            <Lane key={track.name} $selected={track.selected}>
              <GridLines shapeRendering="crispEdges">
                <path d={gridBars.map(bar => `M${barX(bar)} 0h1v156h-1z`).join('')} fill="#484848" />
              </GridLines>
              {track.regions.map(region => <Region key={region.x} region={region} />)}
            </Lane>
          ))}
        </Lanes>
        <Playhead>
          <svg width="16" height="20"><path d="M1 1h15v10l-6 8H8l-7-8z" fill="#bdbdbd" stroke="#222" /></svg>
        </Playhead>
      </Arrange>
    </Workspace>
  </Window>
)

export default App
